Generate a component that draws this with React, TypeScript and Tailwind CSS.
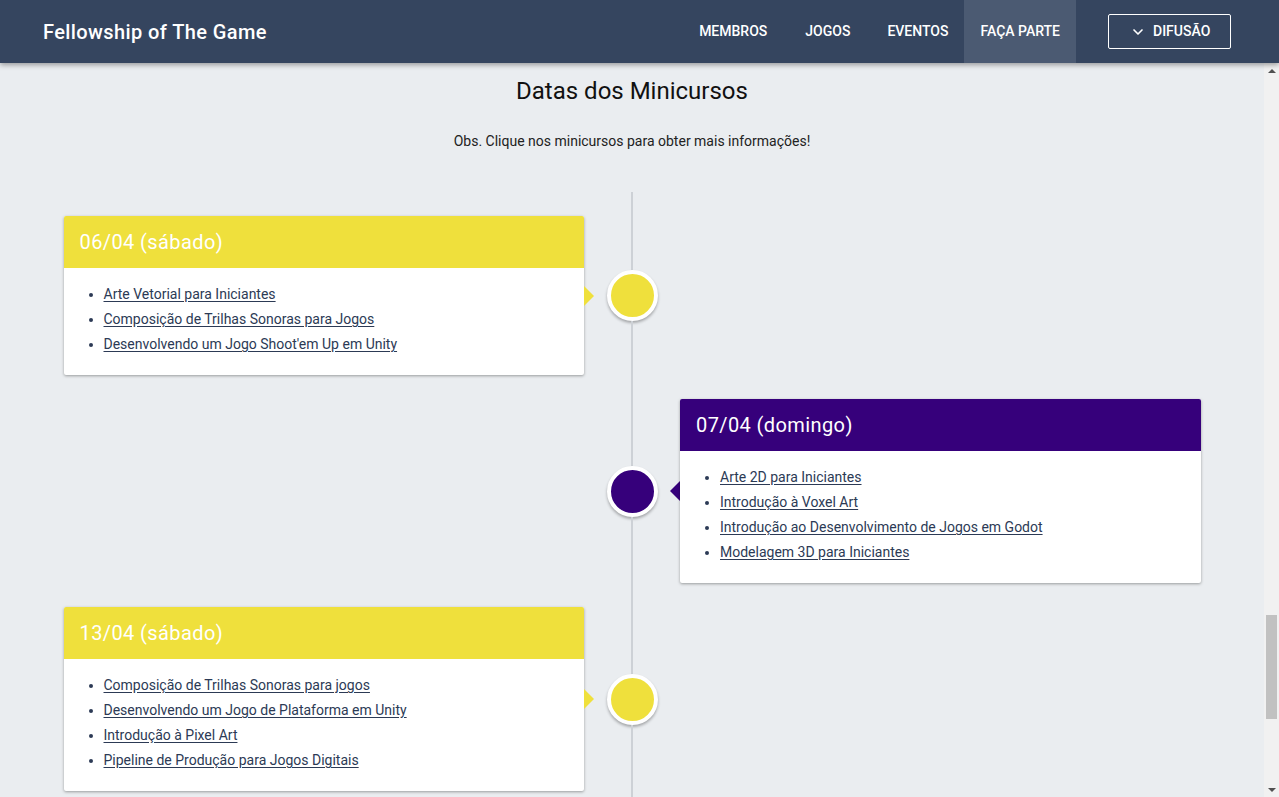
import { ChevronDown } from 'lucide-react'

type Day = {
  title: string
  color: string
  side: 'left' | 'right'
  courses: string[]
}

const days: Day[] = [
  {
    title: '06/04 (sábado)',
    color: 'yellow',
    side: 'left',
    courses: [
      'Arte Vetorial para Iniciantes',
      'Composição de Trilhas Sonoras para Jogos',
      "Desenvolvendo um Jogo Shoot'em Up em Unity",
    ],
  },
  {
    title: '07/04 (domingo)',
    color: 'purple',
    side: 'right',
    courses: [
      'Arte 2D para Iniciantes',
      'Introdução à Voxel Art',
      'Introdução ao Desenvolvimento de Jogos em Godot',
      'Modelagem 3D para Iniciantes',
    ],
  },
  {
    title: '13/04 (sábado)',
    color: 'yellow',
    side: 'left',
    courses: [
      'Composição de Trilhas Sonoras para jogos',
      'Desenvolvendo um Jogo de Plataforma em Unity',
      'Introdução à Pixel Art',
      'Pipeline de Produção para Jogos Digitais',
    ],
  },
]

function Card({ day }: { day: Day }) {
  const head = day.color === 'yellow' ? 'bg-[#efe03c]' : 'bg-[#36007b]'
  return (
    <div className="bg-white rounded-[2px] shadow-[0_1px_3px_rgba(0,0,0,0.35)] overflow-hidden">
      <div className={`${head} h-[52px] flex items-center px-4`}>
        <h3 className="text-white text-[20px] font-normal tracking-[0.4px]">{day.title}</h3>
      </div>
      <ul className="list-disc pl-10 pt-[14px] pb-[18px] text-[14px] leading-[25px] text-[#2c3a55]">
        {day.courses.map((c) => (
          <li key={c}>
            <a href="#" className="underline underline-offset-2">
              {c}
            </a>
          </li>
        ))}
      </ul>
    </div>
  )
}

function Row({ day }: { day: Day }) {
  const yellow = day.color === 'yellow'
  const dot = yellow ? 'bg-[#efe03c]' : 'bg-[#36007b]'
  return (
    <div className="grid grid-cols-[1fr_96px_1fr]">
      <div className="py-3">{day.side === 'left' && <Card day={day} />}</div>
      <div className="flex items-center">
        <div className="w-[10px] flex">
          {day.side === 'left' && (
            <div className="w-0 h-0 border-y-[10px] border-y-transparent border-l-[10px] border-l-[#efe03c]" />
          )}
        </div>
        <div className="flex-1 self-stretch flex flex-col items-center">
          <div className="flex-1 w-[2px] bg-[#cdd1d6]" />
          <div
            className={`w-[51px] h-[51px] rounded-full border-[4px] border-white ${dot} shadow-[0_2px_3px_rgba(0,0,0,0.3)]`}
          />
          <div className="flex-1 w-[2px] bg-[#cdd1d6]" />
        </div>
        <div className="w-[10px] flex justify-end">
          {day.side === 'right' && (
            <div className="w-0 h-0 border-y-[10px] border-y-transparent border-r-[10px] border-r-[#36007b]" />
          )}
        </div>
      </div>
      <div className="py-3">{day.side === 'right' && <Card day={day} />}</div>
    </div>
  )
}

export default function App() {
  const nav = [
    { label: 'MEMBROS', cls: 'mr-[6px]' },
    { label: 'JOGOS', cls: 'mr-[5px]' },
    { label: 'EVENTOS', cls: '' },
    { label: 'FAÇA PARTE', cls: 'bg-[#4b5a72]' },
  ]
  return (
    <div className="h-[797px] flex flex-col bg-[#eaedf0] font-['Roboto',sans-serif] overflow-hidden">
      <header className="relative z-10 h-[63px] shrink-0 bg-[#35455f] flex items-center pl-[43px] pr-[48px] shadow-[0_2px_5px_rgba(0,0,0,0.35)]">
        <span className="text-white text-[20px] font-medium tracking-[0.4px]">Fellowship of The Game</span>
        <nav className="ml-auto flex h-full items-stretch">
          {nav.map((n) => (
            <a
              key={n.label}
              href="#"
              className={`flex items-center px-4 text-white text-[14px] font-medium ${n.cls}`}
            >
              {n.label}
            </a>
          ))}
        </nav>
        <button className="ml-8 h-[35px] w-[123px] flex items-center gap-[7px] pl-[21px] border border-white rounded-[2px] text-white text-[14px] font-medium">
          <ChevronDown size={16} strokeWidth={2.5} />
          DIFUSÃO
        </button>
      </header>

      <div className="flex flex-1 min-h-0">
        <main className="flex-1 overflow-hidden">
          <h2 className="mt-[12px] text-center text-[24px] leading-8 text-[#111]">Datas dos Minicursos</h2>
          <p className="mt-[24px] text-center text-[14px] leading-5 text-[#222]">
            Obs. Clique nos minicursos para obter mais informações!
          </p>
          <div className="mt-[41px] w-[1137px] mx-auto flex flex-col">
            <div className="grid grid-cols-[1fr_96px_1fr] h-3">
              <div />
              <div className="flex justify-center">
                <div className="w-[2px] bg-[#cdd1d6]" />
              </div>
              <div />
            </div>
            {days.map((d) => (
              <Row key={d.title} day={d} />
            ))}
          </div>
        </main>

        <div className="w-[15px] shrink-0 bg-[#f1f1f1] flex flex-col">
          <div className="h-[15px] flex items-center justify-center">
            <div className="w-0 h-0 border-x-[4px] border-x-transparent border-b-[4px] border-b-[#505050]" />
          </div>
          <div className="flex-1">
            <div className="mt-[537px] mx-[2px] h-[104px] bg-[#c1c1c1]" />
          </div>
          <div className="h-[15px] flex items-center justify-center">
            <div className="w-0 h-0 border-x-[4px] border-x-transparent border-t-[4px] border-t-[#505050]" />
          </div>
        </div>
      </div>
    </div>
  )
}
